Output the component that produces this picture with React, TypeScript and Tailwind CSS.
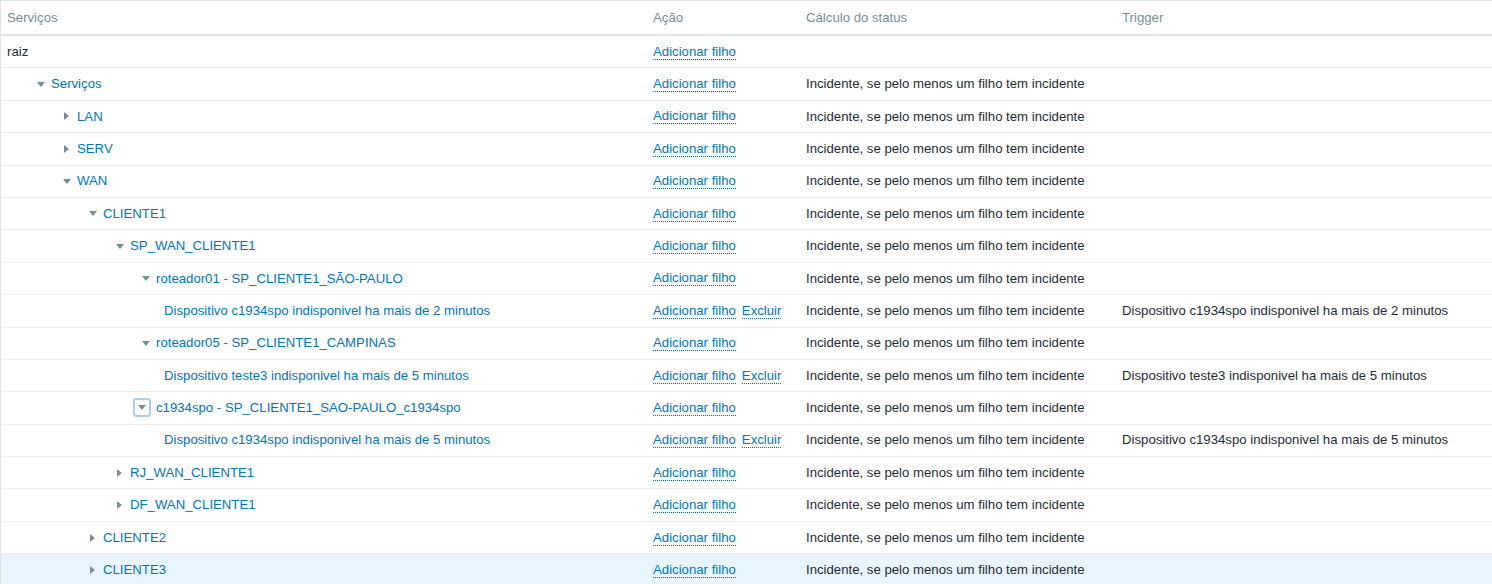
import React from "react";

type Row = {
  name: string;
  level: number; // 0 = raiz
  arrow?: "down" | "right";
  leaf?: boolean;
  excluir?: boolean;
  status?: boolean;
  trigger?: string;
  focus?: boolean;
  highlight?: boolean;
};

const STATUS = "Incidente, se pelo menos um filho tem incidente";

const rows: Row[] = [
  { name: "raiz", level: 0 },
  { name: "Serviços", level: 1, arrow: "down", status: true },
  { name: "LAN", level: 2, arrow: "right", status: true },
  { name: "SERV", level: 2, arrow: "right", status: true },
  { name: "WAN", level: 2, arrow: "down", status: true },
  { name: "CLIENTE1", level: 3, arrow: "down", status: true },
  { name: "SP_WAN_CLIENTE1", level: 4, arrow: "down", status: true },
  { name: "roteador01 - SP_CLIENTE1_SÃO-PAULO", level: 5, arrow: "down", status: true },
  {
    name: "Dispositivo c1934spo indisponivel ha mais de 2 minutos",
    level: 6,
    leaf: true,
    excluir: true,
    status: true,
    trigger: "Dispositivo c1934spo indisponivel ha mais de 2 minutos",
  },
  { name: "roteador05 - SP_CLIENTE1_CAMPINAS", level: 5, arrow: "down", status: true },
  {
    name: "Dispositivo teste3 indisponivel ha mais de 5 minutos",
    level: 6,
    leaf: true,
    excluir: true,
    status: true,
    trigger: "Dispositivo teste3 indisponivel ha mais de 5 minutos",
  },
  { name: "c1934spo - SP_CLIENTE1_SAO-PAULO_c1934spo", level: 5, arrow: "down", status: true, focus: true },
  {
    name: "Dispositivo c1934spo indisponivel ha mais de 5 minutos",
    level: 6,
    leaf: true,
    excluir: true,
    status: true,
    trigger: "Dispositivo c1934spo indisponivel ha mais de 5 minutos",
  },
  { name: "RJ_WAN_CLIENTE1", level: 4, arrow: "right", status: true },
  { name: "DF_WAN_CLIENTE1", level: 4, arrow: "right", status: true },
  { name: "CLIENTE2", level: 3, arrow: "right", status: true },
  { name: "CLIENTE3", level: 3, arrow: "right", status: true, highlight: true },
];

// x position of the text for each level (page coordinates)
const TEXT_X = [7, 51, 77, 103, 130, 156, 164];

function Arrow({ dir }: { dir: "down" | "right" }) {
  if (dir === "down") {
    return (
      <svg width="8" height="5" viewBox="0 0 8 5" className="block">
        <path d="M0 0 H8 L4 5 Z" fill="#768d99" />
      </svg>
    );
  }
  return (
    <svg width="5" height="8" viewBox="0 0 5 8" className="block">
      <path d="M0 0 V8 L5 4 Z" fill="#768d99" />
    </svg>
  );
}

function Link({ children }: { children: React.ReactNode }) {
  return (
    <span className="text-[#0275b8] border-b border-dotted border-[#0275b8] leading-[15px] cursor-pointer">
      {children}
    </span>
  );
}

function NameCell({ row }: { row: Row }) {
  const x = TEXT_X[row.level];
  if (row.level === 0) {
    return <div className="pl-[6px] text-[#1f2c33]">{row.name}</div>;
  }
  if (row.leaf) {
    return (
      <div className="text-[#0275b8]" style={{ paddingLeft: x - 1 }}>
        {row.name}
      </div>
    );
  }
  if (row.focus) {
    return (
      <div className="flex items-center" style={{ paddingLeft: x - 1 - 23 }}>
        <span className="w-[18px] h-[19px] mr-[5px] rounded-[3px] border-2 border-[#a5cff3] flex items-center justify-center">
          <Arrow dir="down" />
        </span>
        <span className="text-[#0275b8]">{row.name}</span>
      </div>
    );
  }
  return (
    <div className="flex items-center" style={{ paddingLeft: x - 1 - (row.arrow === "down" ? 14 : 13) }}>
      <span className={row.arrow === "down" ? "w-[14px] flex" : "w-[13px] flex"}>
        <Arrow dir={row.arrow!} />
      </span>
      <span className="text-[#0275b8]">{row.name}</span>
    </div>
  );
}

export default function App() {
  return (
    <div
      className="w-[1492px] h-[584px] overflow-hidden bg-white text-[13.2px] text-[#1f2c33]"
      style={{ fontFamily: '"Liberation Sans", Arial, sans-serif' }}
    >
      <div className="border-t border-l border-[#dfe4e7]">
        <div className="grid grid-cols-[647px_153px_316px_1fr] h-[35px] border-b-2 border-[#dfe4e7] items-center text-[#768d99]">
          <div className="pl-[6px]">Serviços</div>
          <div className="pl-[5px]">Ação</div>
          <div className="pl-[5px]">Cálculo do status</div>
          <div className="pl-[5px]">Trigger</div>
        </div>
        {rows.map((row, i) => (
          <div
            key={i}
            className={
              "grid grid-cols-[647px_153px_316px_1fr] h-[32.4px] border-b border-[#ebeef0] items-center " +
              (row.highlight ? "bg-[#e8f5ff]" : "")
            }
          >
            <NameCell row={row} />
            <div className="pl-[5px] flex gap-[6px] items-center">
              <Link>Adicionar filho</Link>
              {row.excluir && <Link>Excluir</Link>}
            </div>
            <div className="pl-[5px]">{row.status ? STATUS : ""}</div>
            <div className="pl-[5px]">{row.trigger ?? ""}</div>
          </div>
        ))}
      </div>
    </div>
  );
}
